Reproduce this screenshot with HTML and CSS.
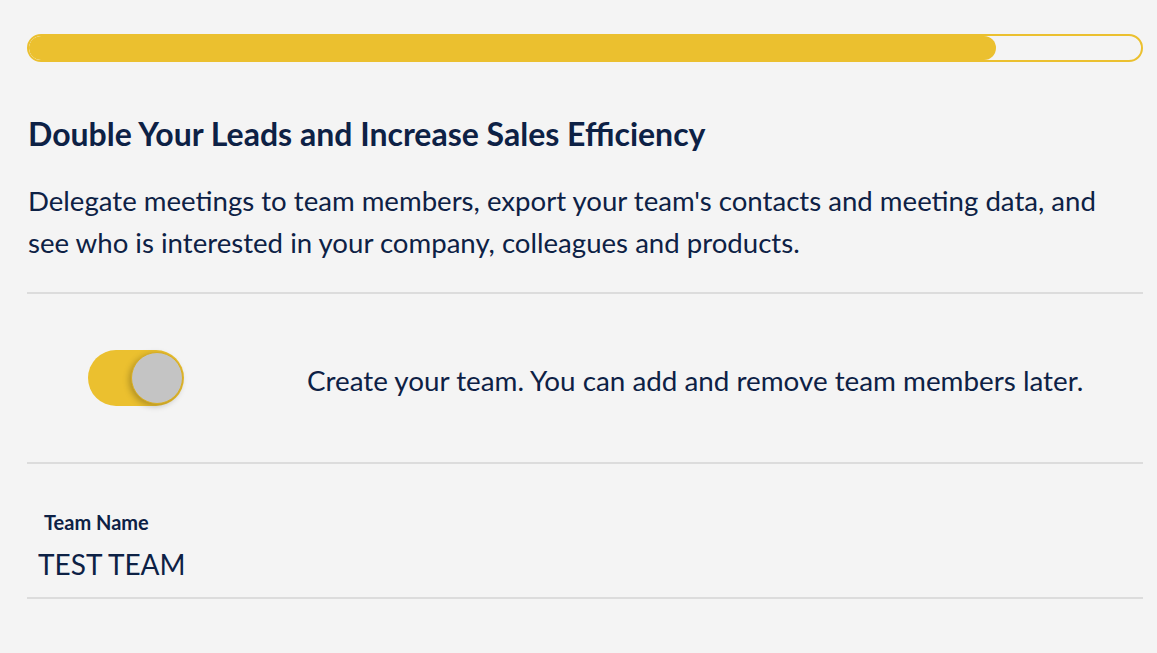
FILE: index.html
```html
<!DOCTYPE html>
<html lang="en">
<head>
  <meta charset="UTF-8">
  <title>Create Team</title>
  <link rel="stylesheet" href="styles.css">
</head>
<body>
  <div class="page">
    <div class="progress">
      <div class="progress-fill" style="width: 87%"></div>
    </div>

    <h2 class="title">Double Your Leads and Increase Sales Efficiency</h2>
    <p class="intro">Delegate meetings to team members, export your team's contacts and meeting data, and see who is interested in your company, colleagues and products.</p>

    <div class="toggle-row">
      <label class="toggle">
        <input type="checkbox" checked>
        <span class="track"><span class="knob"></span></span>
      </label>
      <span class="toggle-text">Create your team. You can add and remove team members later.</span>
    </div>

    <div class="field">
      <label for="team-name">Team Name</label>
      <input type="text" id="team-name" value="TEST TEAM">
    </div>
  </div>
</body>
</html>
```

FILE: styles.css
```css
body {
  margin: 0;
  padding: 0;
  background: #f4f4f4;
  color: #0d2145;
  font-family: Lato, "Open Sans", sans-serif;
}
.page {
  padding: 34px 14px 0 27px;
}
.progress {
  height: 28px;
  box-sizing: border-box;
  border: 2px solid #ebc02f;
  border-radius: 14px;
  overflow: hidden;
}
.progress-fill {
  height: 100%;
  background: #ebc02f;
  border-radius: 14px;
}
.title {
  margin: 53px 0 0 1px;
  font-size: 32px;
  line-height: 38px;
  font-weight: 700;
}
.intro {
  margin: 27px 0 0 0;
  padding: 0 30px 28px 1px;
  font-size: 27.6px;
  line-height: 42px;
  border-bottom: 2px solid #dcdcdc;
}
.toggle-row {
  display: flex;
  align-items: center;
  gap: 123px;
  height: 168px;
  padding-left: 61px;
  border-bottom: 2px solid #dcdcdc;
}
.toggle input {
  display: none;
}
.track {
  display: block;
  position: relative;
  width: 96px;
  height: 56px;
  border-radius: 28px;
  background: #ebc02f;
}
.knob {
  position: absolute;
  top: 2px;
  right: 1px;
  width: 52px;
  height: 52px;
  box-sizing: border-box;
  border-radius: 50%;
  background: #c4c4c4;
  border: 1px solid #d9ae22;
  box-shadow: -2px 2px 6px rgba(0, 0, 0, 0.25);
}
.toggle-text {
  font-size: 27.8px;
  margin-top: 4px;
}
.field {
  padding: 46px 0 13px;
  border-bottom: 2px solid #dcdcdc;
}
.field label {
  display: block;
  margin-left: 17px;
  font-size: 20px;
  font-weight: 700;
  line-height: 24px;
}
.field input {
  display: block;
  width: 100%;
  box-sizing: border-box;
  margin-top: 10px;
  padding: 0 0 0 11px;
  border: none;
  background: transparent;
  color: #0d2145;
  font-family: Lato, sans-serif;
  font-size: 28px;
  line-height: 40px;
  height: 40px;
  outline: none;
}
```
